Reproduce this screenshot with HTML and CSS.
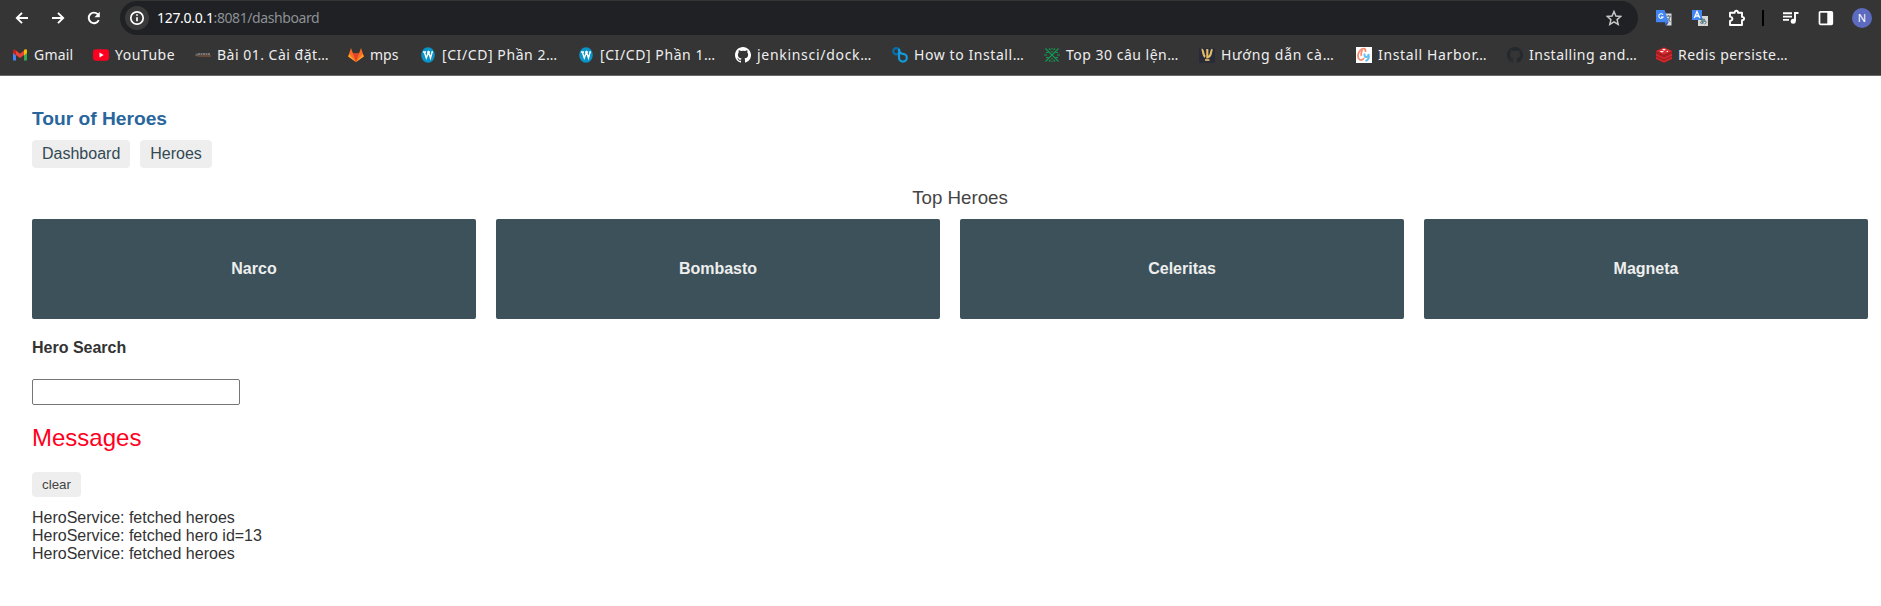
FILE: index.html
```html
<!DOCTYPE html>
<html lang="en">
<head>
<meta charset="utf-8">
<title>Tour of Heroes</title>
<link rel="stylesheet" href="styles.css">
</head>
<body>
<header class="browser">
  <div class="toolbar">
    <div class="nav-icons">
      <svg width="16" height="16" viewBox="0 0 16 16" class="line"><path d="M14 8H3M8 2.8 2.8 8 8 13.2"/></svg>
      <svg width="16" height="16" viewBox="0 0 16 16" class="line"><path d="M2 8h11M8 2.8 13.200 8 8 13.200"/></svg>
      <svg width="16" height="16" viewBox="0 0 16 16" class="line"><path d="M12.800 10.200A5.300 5.300 0 1 1 12.200 4.600"/><path d="M13.800 1.800v5.400H8.400z" fill="#fff" stroke="none"/></svg>
    </div>
    <div class="omnibox">
      <span class="info"><svg width="16" height="16" viewBox="0 0 16 16" class="line"><circle cx="8" cy="8" r="6.200" stroke-width="1.700"/><path d="M8 7.200v4M8 4.200v1.600" stroke-width="1.700"/></svg></span>
      <span class="url"><span class="host">127.0.0.1</span><span class="path">:8081/dashboard</span></span>
      <svg class="star" width="16" height="16" viewBox="0 0 16 16"><path d="m8 1.500 1.900 4.500 4.900.4-3.700 3.200 1.100 4.800L8 11.800l-4.200 2.600 1.100-4.800L1.200 6.400l4.900-.4z"/></svg>
    </div>
    <div class="tools">
      <svg width="16" height="16" viewBox="0 0 16 16"><path fill="#dcdcdc" d="M7 3.500h8.500v12H10z"/><path fill="#4285f4" d="M0 0h8.600l4 12.300H0z"/><path fill="#2459c4" d="M9 12.300h3.600L10.400 16z"/><path d="M10.500 6.200h4.600M12.600 5v1.200M14 6.500c-.4 2.300-1.400 4-3 5M11.600 8l2.800 4" fill="none" stroke="#5b7580"/><path d="M7 4.800A2.300 2.300 0 1 0 7.100 7H5" fill="none" stroke="#fff" stroke-width="1.100"/></svg>
      <svg width="16" height="16" viewBox="0 0 16 16"><path fill="#d7d7d2" d="M6 6h10v10H6z"/><path fill="#4285f4" d="M0 0h10v10H0z"/><path d="m2.300 8 2.700-6.500L7.700 8M3.400 6h3.200" fill="none" stroke="#fff" stroke-width="1.300"/><path d="M8 9.300h5M10 7.800c-.2 3 .2 4.700 1 6M13 10.500c-1 2-4.300 3.800-4.500 2.200-.2-1.700 5.700-3 5.600-.5 0 1-.8 1.500-1.600 1.800" fill="none" stroke="#49717e"/></svg>
      <svg width="18" height="18" viewBox="0 0 18 18" class="line"><path d="M2 3.700h4.700C6.700 1 10 1 10 3.700h4v4.200c2.800 0 2.800 3.400 0 3.400V16H2v-4c3.200-.5 3.200-3.900 0-4.400z" stroke-linejoin="round"/></svg>
      <i class="divider"></i>
      <svg width="17" height="16" viewBox="0 0 17 16" class="line music"><path d="M1 3.300h9M1 6.600h9M1 9.900h6M13 11V3h3.500"/><circle cx="11.200" cy="11.200" r="2.500" fill="#fff" stroke="none"/></svg>
      <svg width="16" height="16" viewBox="0 0 16 16"><rect x="1.500" y="1.800" width="12.800" height="12.500" rx="1" fill="none" stroke="#fff" stroke-width="1.700"/><path d="M9.300 2h5v12.300h-5z" fill="#fff"/></svg>
      <span class="avatar">N</span>
    </div>
  </div>
  <nav class="bookmarks">
    <a class="bm b1"><svg viewBox="0 0 16 16"><path d="M1 4v9.500h3V8L1 5z" fill="#4285f4"/><path d="M12 8v5.500h3V4z" fill="#34a853"/><path d="M12 4v4.500L15 6V3.700C15 2 13.200 2 12 3z" fill="#fbbc04"/><path d="M4 3.500 8 6.800l4-3.300v4.400l-4 3.200-4-3.200z" fill="#ea4335"/><path d="M4 3.500C2.800 2 1 2.300 1 4v2l3 2.500z" fill="#c5221f"/></svg><span>Gmail</span></a>
    <a class="bm b2"><svg viewBox="0 0 16 16"><rect y="2.300" width="16" height="11.400" rx="3" fill="#ff0020"/><path d="m6.500 5.600 4.200 2.400-4.200 2.400z" fill="#fff"/></svg><span>YouTube</span></a>
    <a class="bm b3"><svg viewBox="0 0 16 16"><circle cx="1.800" cy="8" r="1.400" fill="#666"/><path d="M3 7h12" stroke="#777" stroke-width="1.800" stroke-dasharray="2 .5"/><path d="M3 9h13" stroke="#785039" stroke-width="1.500"/></svg><span>Bài 01. Cài đặt…</span></a>
    <a class="bm b4"><svg viewBox="0 0 16 16"><path d="M8 15 .2 9.500 3 1l2 5.500h6L13 1l2.800 8.500z" fill="#fc6d26"/><path d="M8 15 5 6.500h6z" fill="#e24329"/><path d="m8 15-7.800-5.500L1.200 7zM8 15l7.800-5.500-1-2.500z" fill="#fca326"/></svg><span>mps</span></a>
    <a class="bm b5"><svg viewBox="0 0 16 16"><ellipse cx="8" cy="8" rx="6.800" ry="7.800" fill="#0a94c7"/><path d="M3 5h3M7 5h3M4.300 5l2 6L8.500 5l2 6L12 5.500V5h1" fill="none" stroke="#fff" stroke-width="1.400"/></svg><span>[CI/CD] Phần 2…</span></a>
    <a class="bm b6"><svg viewBox="0 0 16 16"><ellipse cx="8" cy="8" rx="6.800" ry="7.800" fill="#0a94c7"/><path d="M3 5h3M7 5h3M4.300 5l2 6L8.500 5l2 6L12 5.500V5h1" fill="none" stroke="#fff" stroke-width="1.400"/></svg><span>[CI/CD] Phần 1…</span></a>
    <a class="bm b7"><svg viewBox="0 0 16 16"><path fill="#fff" d="M8 0C3.580 0 0 3.580 0 8c0 3.540 2.290 6.530 5.470 7.590.4.070.55-.17.55-.38v-1.490c-2.230.48-2.700-.95-2.700-.95-.36-.92-.89-1.170-.89-1.170-.72-.5.060-.49.060-.49.8.060 1.230.82 1.230.82.71 1.220 1.870.87 2.330.67.070-.52.280-.88.510-1.080-1.780-.2-3.640-.89-3.640-3.950 0-.87.310-1.590.82-2.150-.080-.2-.36-1.020.080-2.120 0 0 .67-.22 2.200.82a7.600 7.600 0 0 1 4 0c1.530-1.040 2.200-.82 2.200-.82.440 1.100.160 1.920.080 2.120.51.560.82 1.270.82 2.150 0 3.070-1.870 3.750-3.650 3.950.29.250.54.730.54 1.480v2.210c0 .21.150.46.55.38A8 8 0 0 0 8 0"/></svg><span>jenkinsci/dock…</span></a>
    <a class="bm b8"><svg viewBox="0 0 16 16" fill="none" stroke-width="2.200"><circle cx="4.300" cy="4.300" r="3.100" stroke="#086ca8"/><path d="M7 1.800v9a3.900 3.900 0 1 0 4-4C8.500 6.800 7 5 7 2" stroke="#139bdc"/></svg><span>How to Install…</span></a>
    <a class="bm b9"><svg viewBox="0 0 16 16" fill="none" stroke="#119b55" stroke-width="1.100"><path d="m1.500 1.500 13 13M14.500 1.500l-13 13"/><path d="M8 1v1.500M8 4v1.500M8 11v1.500M8 14v1M5 1.500 6.500 3M11 1.500 9.500 3M5 14.500 6.500 13M11 14.500 9.500 13M0 8h3M13 8h3M2 5.500h2.500M11.500 5.500H14M2 10.500h2.500M11.500 10.500H14"/></svg><span>Top 30 câu lện…</span></a>
    <a class="bm b10"><svg viewBox="0 0 16 16"><path fill="#292c38" d="M0 1h16v15H0z"/><path d="M2.500 2.500c2.500 0 .8 6 3.800 7.200M8.300 2v9.500M13.500 2.500c-2.500.5 0 7-5 7.700" fill="none" stroke="#e2bd68" stroke-width="2.100"/><path d="M6 13h4.500" stroke="#e2bd68" stroke-width="1.700"/></svg><span>Hướng dẫn cà…</span></a>
    <a class="bm b11"><svg viewBox="0 0 16 16"><path fill="#fff" d="M0 0h16v16H0z"/><path d="M9.500 5C10 1 6.500.8 4 3.500 1.500 6.500 1.200 11 3.500 12.500c1.800 1 3.700-.3 4.500-1.500M6.500 3C5 5 5 8 5.500 9" fill="none" stroke="#f98d72" stroke-width="1.800"/><path d="M8.500 6.500c-.5 4.500 3.500 5 4 .5.800 3 .3 6-3 7" fill="none" stroke="#65bff0" stroke-width="1.900"/></svg><span>Install Harbor…</span></a>
    <a class="bm b12"><svg viewBox="0 0 16 16"><path fill="#24292e" d="M8 0C3.580 0 0 3.580 0 8c0 3.540 2.290 6.530 5.470 7.590.4.070.55-.17.55-.38v-1.490c-2.230.48-2.700-.95-2.700-.95-.36-.92-.89-1.170-.89-1.170-.72-.5.060-.49.060-.49.8.060 1.230.82 1.230.82.71 1.220 1.870.87 2.330.67.070-.52.280-.88.510-1.080-1.780-.2-3.640-.89-3.640-3.950 0-.87.310-1.590.82-2.150-.080-.2-.36-1.020.080-2.120 0 0 .67-.22 2.200.82a7.600 7.600 0 0 1 4 0c1.530-1.040 2.200-.82 2.200-.82.440 1.100.160 1.920.080 2.120.51.560.82 1.270.82 2.150 0 3.070-1.870 3.750-3.650 3.950.29.250.54.730.54 1.480v2.210c0 .21.150.46.55.38A8 8 0 0 0 8 0"/></svg><span>Installing and…</span></a>
    <a class="bm b13"><svg viewBox="0 0 16 16"><path d="m0 4 8-3.500L16 4v8l-8 4-8-4z" fill="#a41e22"/><path d="m0 4 8-3.500L16 4 8 7.500zM0 7l8 3.700L16 7v1.500L8 12 0 8.500zM0 10.300 8 14l8-3.700v1.400L8 15.300l-8-3.600z" fill="#dc2b2f"/><path d="m6 2.500 2-.7 2 1-2 .6zM3.500 4.500 6 3.800l2 1L6 5.500zM10 4.300l2-.5v1.400z" fill="#fff"/></svg><span>Redis persiste…</span></a>
  </nav>
</header>
<main class="page">
  <h1 class="title">Tour of Heroes</h1>
  <nav class="links"><a>Dashboard</a><a>Heroes</a></nav>
  <h2 class="top">Top Heroes</h2>
  <div class="heroes"><a>Narco</a><a>Bombasto</a><a>Celeritas</a><a>Magneta</a></div>
  <label class="search-label" for="search">Hero Search</label>
  <input class="search" id="search">
  <h2 class="messages">Messages</h2>
  <button class="clear">clear</button>
  <div class="log">
    <div>HeroService: fetched heroes</div>
    <div>HeroService: fetched hero id=13</div>
    <div>HeroService: fetched heroes</div>
  </div>
</main>
</body>
</html>
```

FILE: styles.css
```css
* { box-sizing: border-box; }
body { margin: 0; background: #fff; font: 16px/18px "Liberation Sans", Arial, sans-serif; color: #333; overflow: hidden; }
svg { display: block; flex: none; }
.line { fill: none; stroke: #fff; stroke-width: 1.9; }

.browser { height: 76px; background: #353535; border-bottom: 1px solid #696969; font-family: "Noto Sans", sans-serif; }
.toolbar { display: flex; height: 35px; padding-top: 1px; }
.nav-icons { display: flex; align-items: center; gap: 20px; width: 120px; padding-left: 14px; }
.omnibox { display: flex; align-items: center; width: 1518px; height: 34px; padding: 0 16px 0 5px; border-radius: 17px; background: #202124; }
.info { display: grid; place-items: center; width: 24px; height: 24px; border-radius: 50%; background: #3a3a3a; }
.url { flex: 1; margin-left: 8px; font-size: 14px; line-height: 20px; color: #8c9094; }
.host { color: #fff; letter-spacing: -0.3px; }
.path { letter-spacing: -0.42px; }
.star { fill: none; stroke: #c7c7c7; stroke-width: 1.5; }
.tools { display: flex; align-items: center; padding-left: 18px; }
.tools svg + svg { margin-left: 20px; }
.divider { width: 2px; height: 16px; margin: 0 18px 0 16px; background: #000; }
.tools .music + svg { margin-left: 19px; }
.avatar { display: grid; place-items: center; width: 20px; height: 20px; margin-left: 18px; border-radius: 50%; background: #5c6bc0; color: #fff; font-size: 11px; line-height: 20px; }

.bookmarks { display: flex; height: 40px; padding-left: 12px; align-items: center; }
.bm { display: flex; align-items: center; gap: 6px; flex: none; color: #eee; font-size: 14px; line-height: 20px; letter-spacing: 0.5px; white-space: nowrap; }
.bm svg { width: 16px; height: 16px; }
.b1 { width: 81px; letter-spacing: 0.2px; }
.b2 { width: 102px; }
.b3 { width: 153px; }
.b4 { width: 72px; letter-spacing: 0; }
.b5 { width: 158px; letter-spacing: 0.58px; }
.b6 { width: 157px; letter-spacing: 0.58px; }
.b7 { width: 157px; letter-spacing: 0.7px; }
.b8 { width: 152px; letter-spacing: 0.58px; }
.b9 { width: 155px; }
.b10 { width: 157px; letter-spacing: 0.75px; }
.b11 { width: 151px; letter-spacing: 0.65px; }
.b12 { width: 149px; }

.page { display: flex; flex-direction: column; align-items: flex-start; padding: 32px 13px 0 32px; }
.title { margin: 0; color: #28669c; font-size: 19.2px; line-height: 22px; }
.links { display: flex; gap: 10px; margin-top: 10px; }
.links a { height: 28px; padding: 5px 10px; border-radius: 4px; background: #eee; color: #334953; }
.top { align-self: center; margin: 19px 0 0; padding-left: 20px; color: #444; font-size: 18.72px; font-weight: 400; line-height: 22px; }
.heroes { display: grid; grid-template-columns: repeat(4, 444px); gap: 20px; margin-top: 10px; }
.heroes a { display: flex; align-items: center; justify-content: center; height: 100px; border-radius: 2px; background: #3c5159; color: #eee; font-weight: 700; }
.search-label { margin-top: 20px; font-weight: 700; }
.search { width: 208px; height: 26px; margin-top: 22px; border: 1px solid #767676; border-radius: 2px; padding: 1px 2px; background: #fff; }
.messages { margin: 19px 0 0; color: #ff0020; font-size: 24px; font-weight: 400; line-height: 28px; }
.clear { height: 25px; margin-top: 20px; padding: 0 10px; border: 0; border-radius: 4px; background: #eee; color: #444; font: 13.333px/25px "Liberation Sans", Arial, sans-serif; }
.log { margin-top: 12px; }
```
